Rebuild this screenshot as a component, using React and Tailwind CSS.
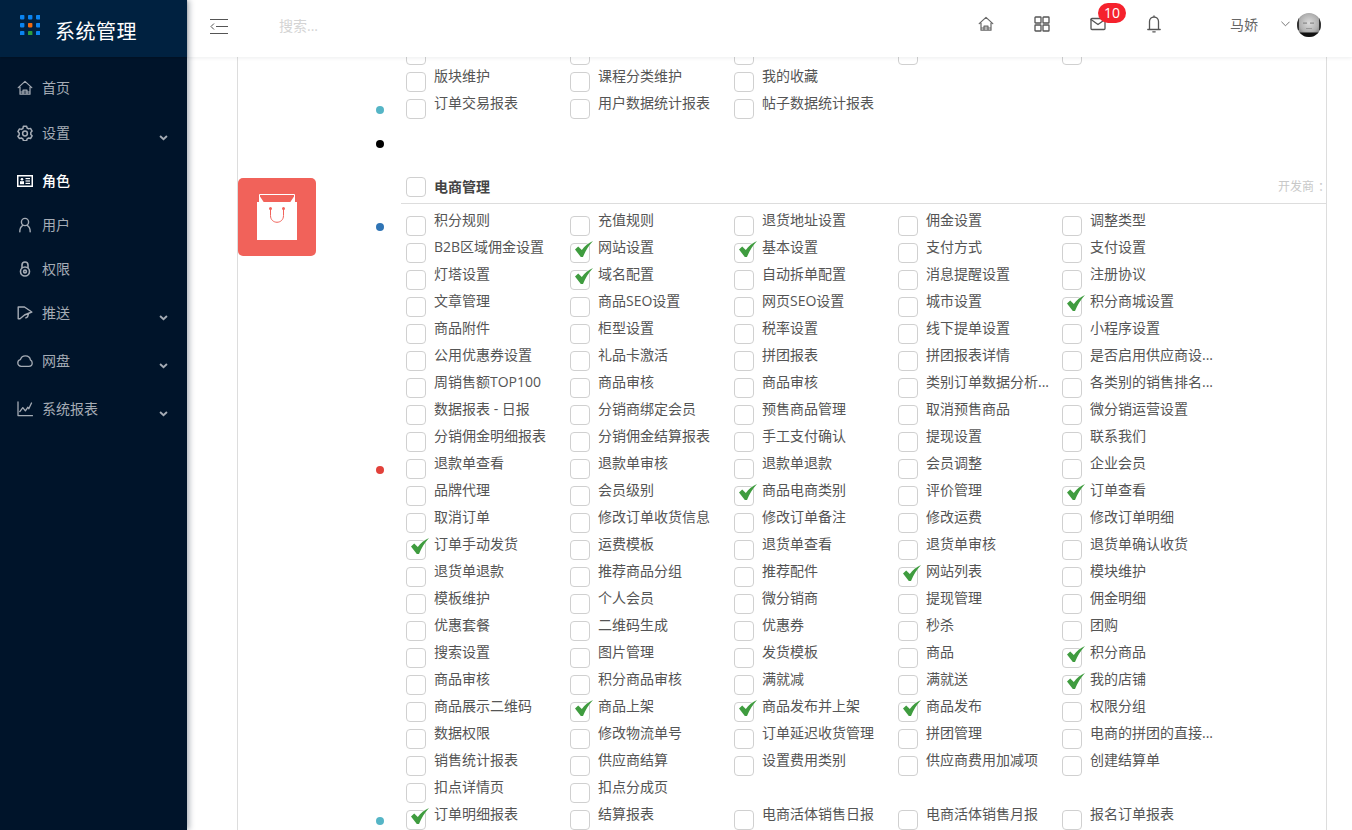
import React from "react";

const I = ({ children, cls = "w-[16px] h-[16px]", vb = "0 0 16 16", sw = 1.2 }) => (
  <svg viewBox={vb} className={cls} fill="none" stroke="currentColor" strokeWidth={sw} strokeLinecap="round" strokeLinejoin="round">
    {children}
  </svg>
);

const HomeI = () => (
  <I><path d="M1.200 7.600 8 1.400l6.800 6.200M3 7v7.200h10V7M6 14.200v-4h4v4M3.400 12h9.200" /></I>
);
const GearI = () => (
  <I sw={1.500}>
    <path d="M6.400 1.200h3.200l.5 1.800 1.600.9 1.800-.5 1.600 2.700-1.300 1.400v1.900l1.300 1.400-1.600 2.700-1.800-.5-1.600.9-.5 1.800H6.400l-.5-1.800-1.600-.9-1.800.5L.9 11.300l1.300-1.400V8L.9 6.600 2.500 3.900l1.800.5 1.600-.9z" />
    <circle cx="8" cy="8.500" r="2.400" />
  </I>
);
const RoleI = () => (
  <svg viewBox="0 0 16 12" className="w-[16px] h-[12px]">
    <rect width="16" height="12" fill="#fff" />
    <rect x="1.500" y="1.500" width="13" height="9" fill="#00142a" />
    <circle cx="5" cy="4.300" r="1.300" fill="#fff" />
    <rect x="3" y="6.200" width="4" height="3" fill="#fff" />
    <rect x="8.500" y="3" width="4.500" height="1.200" fill="#fff" />
    <rect x="8.500" y="5.400" width="4.500" height="1.200" fill="#fff" />
    <rect x="8.500" y="7.800" width="4.500" height="1.200" fill="#fff" />
  </svg>
);
const UserI = () => (
  <I sw={1.400}><circle cx="8" cy="5" r="3.600" /><path d="M2.800 14.800c0-3 1.500-5.500 3-6.400M13.200 14.800c0-3-1.500-5.500-3-6.400M2.800 14.800h.1M13.200 14.800h-.1" /></I>
);
const LockI = () => (
  <I sw={1.600}><path d="M5 6.500V4a3 3 0 0 1 6 0v2.500" /><circle cx="8" cy="10.500" r="4.500" /><circle cx="8" cy="10.500" r="1.400" /></I>
);
const PushI = () => (
  <I sw={1.400}><path d="M1.200 2h6.300l7.300 5-7.300 3-4.500 3.800H1.200zM8.800 12.800l1.800-1 .9-3" /></I>
);
const CloudI = () => (
  <I sw={1.300}><path d="M4.200 13.300C2.200 13.300.8 11.800.8 10c0-1.700 1.100-3 2.600-3.300C4 4.400 6 2.800 8.400 2.800c2.600 0 4.700 1.800 5 4.100 1.100.6 1.800 1.700 1.800 3 0 1.900-1.400 3.400-3.400 3.400z" /></I>
);
const ChartI = () => (
  <I sw={1.300}><path d="M1 1v13.600h14.400M2.800 10.600l3-4 2.600 3.200 2.500-3.600.9 1.600L14.500 2" /></I>
);

const Chevron = () => (
  <svg viewBox="0 0 10 7" className="w-[9px] h-[6px]" fill="none" stroke="#a5acb5" strokeWidth="2.200">
    <path d="M1 1.200 5 5l4-3.800" />
  </svg>
);

const Logo = () => (
  <svg viewBox="0 0 20 20" className="w-[20px] h-[20px]">
    {[0, 8, 16].map((y) =>
      [0, 8, 16].map((x) => (
        <rect key={x + "-" + y} x={x} y={y} width="4.400" height="4.400" rx="0.800"
          fill={x === 8 && y === 8 ? "#f26a0f" : x === 8 && y === 16 ? "#2e9e3f" : "#0a84f0"} />
      ))
    )}
  </svg>
);

const NavItem = ({ icon, label, active, sub }) => (
  <div className={`flex items-start pl-[17px] pr-[19px] ${sub ? "h-[48px]" : "h-[44px]"} ${active ? "text-white font-medium" : "text-[#a5acb5]"}`}>
    <div className="w-[16px] h-[44px] flex items-center justify-center shrink-0">{icon}</div>
    <span className="ml-[9px] h-[44px] leading-[44px] text-[14px]">{label}</span>
    {sub && (
      <div className="ml-auto h-[54px] flex items-center">
        <Chevron />
      </div>
    )}
  </div>
);

const Check = () => (
  <svg viewBox="0 0 18 16" className="absolute left-[4px] top-[-3px] w-[18px] h-[16px]">
    <path d="M0 8.500 3.200 5.500 6.800 9C9.500 5.200 13.500 2 18 0 14 4.500 10.500 9.500 8 16H5.800z" fill="#3f9c3f" />
  </svg>
);

const Box = ({ on }) => (
  <div className="relative shrink-0 w-[20px] h-[20px] mt-[6px] border border-[#d0d0d0] rounded-[4px] bg-white">
    {on && <Check />}
  </div>
);

const DOTS = { teal: "bg-[#55b5c6]", black: "bg-black", blue: "bg-[#2f74b5]", red: "bg-[#e2403a]" };

const Row = ({ items, dot }) => (
  <div className="flex h-[27px]">
    <div className="w-[90px] shrink-0 pl-[60px] pt-[13px]">
      {dot && <div className={`w-[8px] h-[8px] rounded-full ${DOTS[dot]}`} />}
    </div>
    {items.map((it, i) => {
      const on = it.endsWith("*");
      const t = on ? it.slice(0, -1) : it;
      return (
        <div key={i} className="w-[164px] shrink-0 flex items-start">
          <Box on={on} />
          <span className="ml-[8px] whitespace-nowrap text-[14px] leading-[20px] text-[#555]">{t}</span>
        </div>
      );
    })}
  </div>
);

const top = [
  { items: ["", "", "", "", ""] },
  { items: ["版块维护", "课程分类维护", "我的收藏"] },
  { items: ["订单交易报表", "用户数据统计报表", "帖子数据统计报表"], dot: "teal" },
];

const mall = [
  { items: ["积分规则", "充值规则", "退货地址设置", "佣金设置", "调整类型"], dot: "blue" },
  { items: ["B2B区域佣金设置", "网站设置*", "基本设置*", "支付方式", "支付设置"] },
  { items: ["灯塔设置", "域名配置*", "自动拆单配置", "消息提醒设置", "注册协议"] },
  { items: ["文章管理", "商品SEO设置", "网页SEO设置", "城市设置", "积分商城设置*"] },
  { items: ["商品附件", "柜型设置", "税率设置", "线下提单设置", "小程序设置"] },
  { items: ["公用优惠券设置", "礼品卡激活", "拼团报表", "拼团报表详情", "是否启用供应商设..."] },
  { items: ["周销售额TOP100", "商品审核", "商品审核", "类别订单数据分析...", "各类别的销售排名..."] },
  { items: ["数据报表 - 日报", "分销商绑定会员", "预售商品管理", "取消预售商品", "微分销运营设置"] },
  { items: ["分销佣金明细报表", "分销佣金结算报表", "手工支付确认", "提现设置", "联系我们"] },
  { items: ["退款单查看", "退款单审核", "退款单退款", "会员调整", "企业会员"], dot: "red" },
  { items: ["品牌代理", "会员级别", "商品电商类别*", "评价管理", "订单查看*"] },
  { items: ["取消订单", "修改订单收货信息", "修改订单备注", "修改运费", "修改订单明细"] },
  { items: ["订单手动发货*", "运费模板", "退货单查看", "退货单审核", "退货单确认收货"] },
  { items: ["退货单退款", "推荐商品分组", "推荐配件", "网站列表*", "模块维护"] },
  { items: ["模板维护", "个人会员", "微分销商", "提现管理", "佣金明细"] },
  { items: ["优惠套餐", "二维码生成", "优惠券", "秒杀", "团购"] },
  { items: ["搜索设置", "图片管理", "发货模板", "商品", "积分商品*"] },
  { items: ["商品审核", "积分商品审核", "满就减", "满就送", "我的店铺*"] },
  { items: ["商品展示二维码", "商品上架*", "商品发布并上架*", "商品发布*", "权限分组"] },
  { items: ["数据权限", "修改物流单号", "订单延迟收货管理", "拼团管理", "电商的拼团的直接..."] },
  { items: ["销售统计报表", "供应商结算", "设置费用类别", "供应商费用加减项", "创建结算单"] },
  { items: ["扣点详情页", "扣点分成页"] },
  { items: ["订单明细报表*", "结算报表", "电商活体销售日报", "电商活体销售月报", "报名订单报表"], dot: "teal" },
];

const Bag = () => (
  <svg viewBox="0 0 40 46" className="w-[40px] h-[46px]">
    <path d="M2.500.5h35v8h-35z" fill="none" stroke="#fff" strokeWidth="1" />
    <path d="M2 1v7.500h5zM38 1v7.500h-5z" fill="#fff" />
    <rect x="0" y="8" width="40" height="38" fill="#fff" />
    <circle cx="13.500" cy="14.500" r="1.500" fill="#f1625a" />
    <circle cx="26.500" cy="14.500" r="1.500" fill="#f1625a" />
    <path d="M13.500 14.500v7c0 9 13 9 13 0v-7" fill="none" stroke="#f1625a" strokeWidth="1" />
  </svg>
);

const Avatar = () => (
  <svg viewBox="0 0 24 24" className="w-[24px] h-[24px]">
    <defs>
      <clipPath id="av"><circle cx="12" cy="12" r="12" /></clipPath>
      <radialGradient id="face" cx="50%" cy="42%" r="55%">
        <stop offset="0%" stopColor="#dcdcdc" />
        <stop offset="70%" stopColor="#b0b0b0" />
        <stop offset="100%" stopColor="#808080" />
      </radialGradient>
    </defs>
    <g clipPath="url(#av)">
      <rect width="24" height="24" fill="url(#face)" />
      <rect x="6" y="9.500" width="4" height="1.200" fill="#888" />
      <rect x="13" y="9.500" width="4" height="1.200" fill="#888" />
      <rect x="9" y="15" width="6" height="1" fill="#999" />
      <rect x="0" y="5" width="2" height="12" fill="#333" />
      <rect x="22" y="5" width="2" height="12" fill="#333" />
      <rect y="19.500" width="24" height="5" fill="#111" />
    </g>
  </svg>
);

export default function App() {
  return (
    <div className="flex h-[830px] w-[1352px] overflow-hidden bg-white [font-family:'Open_Sans','Noto_Sans_CJK_SC',sans-serif]">
      <aside className="relative z-20 w-[187px] shrink-0 bg-[#00142a] shadow-[2px_0_6px_rgba(0,21,41,0.35)]">
        <div className="h-[57px] bg-[#002140] flex items-start pl-[20px] pt-[15px] shadow-[0_1px_2px_rgba(0,0,0,0.2)]">
          <Logo />
          <span className="ml-[15px] mt-[3px] text-[20px] leading-[28px] tracking-[0.5px] text-white">系统管理</span>
        </div>
        <nav className="pt-[9px]">
          <div className="pb-[1px]"><NavItem icon={<HomeI />} label="首页" /></div>
          <NavItem icon={<GearI />} label="设置" sub />
          <NavItem icon={<RoleI />} label="角色" active />
          <NavItem icon={<UserI />} label="用户" />
          <NavItem icon={<LockI />} label="权限" />
          <NavItem icon={<PushI />} label="推送" sub />
          <NavItem icon={<CloudI />} label="网盘" sub />
          <NavItem icon={<ChartI />} label="系统报表" sub />
        </nav>
      </aside>

      <div className="flex-1 min-w-0 flex flex-col">
        <header className="relative z-10 h-[57px] shrink-0 bg-white flex items-center shadow-[0_1px_4px_rgba(0,21,41,0.08)] text-[#555]">
          <svg viewBox="0 0 18 15" className="ml-[23px] w-[18px] h-[15px] mb-[5px]" fill="none" stroke="#555" strokeWidth="1">
            <path d="M0 .5h18M6 7.500h12M0 14.500h18M4 4.500 1 7.500l3 3" />
          </svg>
          <span className="ml-[51px] mb-[6px] text-[14px] text-[#d4d4d4]">搜索...</span>
          <div className="ml-auto flex items-center mb-[9px]">
            <div className="w-[56px] flex justify-center text-[#666]"><HomeI /></div>
            <div className="w-[56px] flex justify-center text-[#555]">
              <I sw={1.300}><rect x="1" y="1" width="6" height="6" rx=".6" /><rect x="9" y="1" width="6" height="6" rx=".6" /><rect x="1" y="9" width="6" height="6" rx=".6" /><rect x="9" y="9" width="6" height="6" rx=".6" /></I>
            </div>
            <div className="relative w-[56px] flex justify-center text-[#555]">
              <I sw={1.300}><rect x="1" y="2.500" width="14" height="11" rx="1" /><path d="M1 3.500 8 8.500l7-5" /></I>
              <span className="absolute left-[28px] top-[-13px] h-[20px] min-w-[28px] px-[5px] rounded-full bg-[#f5222d] text-white text-[14px] leading-[20px] text-center">10</span>
            </div>
            <div className="w-[56px] flex justify-center text-[#555]">
              <svg viewBox="0 0 14 18" className="w-[14px] h-[18px]" fill="none" stroke="currentColor" strokeWidth="1.300" strokeLinecap="round">
                <path d="M2.500 14V6.500a4.500 4.500 0 0 1 9 0V14M.8 14.500h12.400M7 .8v1.200M5.800 16.800h2.400" />
              </svg>
            </div>
            <span className="ml-[48px] mt-[2px] text-[14px] leading-[20px] text-[#666]">马娇</span>
            <svg viewBox="0 0 10 6" className="ml-[23px] w-[9px] h-[6px]" fill="none" stroke="#666" strokeWidth="1"><path d="M.5.500 5 5 9.500.500" /></svg>
            <div className="ml-[7px] mr-[31px] mt-[1px]"><Avatar /></div>
          </div>
        </header>

        <main className="flex-1 min-h-0 overflow-hidden">
          <div className="ml-[50px] w-[1090px] min-h-[900px] -mt-[18px] border-x border-[#ddd]">
            <div className="pl-[78px]">
              {top.map((r, i) => <Row key={i} items={r.items} dot={r.dot} />)}
              <div className="mt-[7px]"><Row items={[]} dot="black" /></div>
            </div>
            <div className="flex mt-[24px]">
              <div className="w-[78px] h-[78px] shrink-0 rounded-[5px] bg-[#f1625a] flex items-center justify-center">
                <Bag />
              </div>
              <div className="flex-1 min-w-0">
                <div className="ml-[85px] -mt-[1px] h-[27px] flex items-start border-b border-[#ddd]">
                  <div className="ml-[5px] -mt-[6px]"><Box /></div>
                  <span className="ml-[8px] text-[14px] leading-[20px] font-semibold text-[#444]">电商管理</span>
                  <span className="ml-auto -mr-[4px] text-[12px] leading-[20px] text-[#c8c8c8]">开发商<span className="ml-[4px]">：</span></span>
                </div>
                <div className="mt-[6px]">
                  {mall.map((r, i) => <Row key={i} items={r.items} dot={r.dot} />)}
                </div>
              </div>
            </div>
          </div>
        </main>
      </div>
    </div>
  );
}
